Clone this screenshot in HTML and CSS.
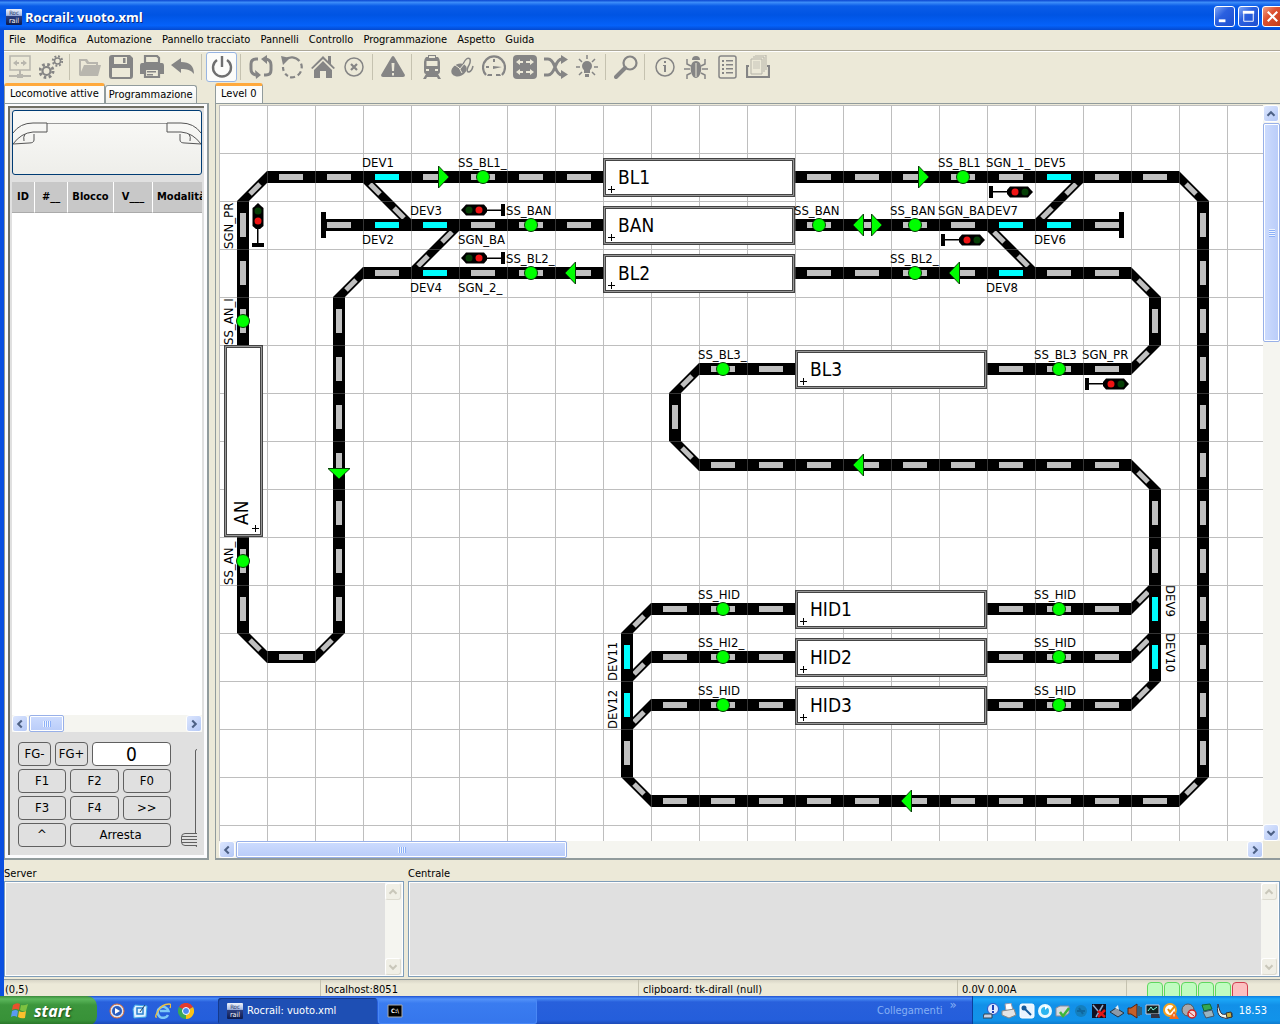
FILE: index.html
```html
<!DOCTYPE html>
<html lang="it">
<head>
<meta charset="utf-8">
<title>Rocrail: vuoto.xml</title>
<link rel="stylesheet" href="styles.css">
</head>
<body>
<svg class="defs" aria-hidden="true">
  <defs>
    <linearGradient id="logo-g" x1="0" y1="0" x2="0" y2="1"><stop offset="0" stop-color="#eef2fb"/><stop offset=".4" stop-color="#a9bbe2"/><stop offset=".45" stop-color="#2c3f80"/><stop offset="1" stop-color="#0d1a4c"/></linearGradient>
    <symbol id="logo" viewBox="0 0 16 16"><rect width="16" height="16" rx="1" fill="url(#logo-g)"/><text x="8" y="6" font-size="6" text-anchor="middle" fill="#223064">Roc</text><text x="8" y="14" font-size="7" text-anchor="middle" fill="#fff">rail</text></symbol>
    <symbol id="up" viewBox="0 0 16 16"><path d="M4 10l4-4 4 4" fill="none" stroke="currentColor" stroke-width="2.4"/></symbol>
    <symbol id="down" viewBox="0 0 16 16"><path d="M4 6l4 4 4-4" fill="none" stroke="currentColor" stroke-width="2.4"/></symbol>
    <symbol id="left" viewBox="0 0 16 16"><path d="M10 4L6 8l4 4" fill="none" stroke="currentColor" stroke-width="2.4"/></symbol>
    <symbol id="right" viewBox="0 0 16 16"><path d="M6 4l4 4-4 4" fill="none" stroke="currentColor" stroke-width="2.4"/></symbol>
  </defs>
</svg>

<div class="window">
  <header class="titlebar">
    <svg class="icon16"><use href="#logo"/></svg>
    <h1>Rocrail: vuoto.xml</h1>
    <button class="cap" aria-label="Riduci"><svg viewBox="0 0 20 20"><path d="M4 13h7v3H4z" fill="#fff"/></svg></button>
    <button class="cap" aria-label="Ingrandisci"><svg viewBox="0 0 20 20"><path d="M5 6h10v9H5z" fill="none" stroke="#fff"/><path d="M4 4h12v3H4z" fill="#fff"/></svg></button>
    <button class="cap close" aria-label="Chiudi"><svg viewBox="0 0 20 20"><path d="M5 5l10 10M15 5L5 15" stroke="#fff" stroke-width="2.2"/></svg></button>
  </header>

  <nav class="menubar">
    <button>File</button><button>Modifica</button><button>Automazione</button><button>Pannello tracciato</button><button>Pannelli</button><button>Controllo</button><button>Programmazione</button><button>Aspetto</button><button>Guida</button>
  </nav>

  <div class="toolbar">
    <button class="off" aria-label="Connetti"><svg viewBox="0 0 24 24"><path d="M2 1h20v14H2z" class="l"/><path d="M5 8l4-3v2h2v2H9v2zM19 8l-4-3v2h-2v2h2v2zM11 15h2v5h-2zM1 20h8v-1h6v1h8v2h-8v1H9v-1H1z"/></svg></button>
    <button aria-label="Impostazioni"><svg viewBox="0 0 24 24"><circle cx="7.500" cy="16" r="4" class="l2"/><circle cx="7.500" cy="16" r="6.500" fill="none" stroke="#858585" stroke-width="3" stroke-dasharray="2.600 2.500"/><circle cx="18.500" cy="6" r="3" class="l"/><circle cx="18.500" cy="6" r="4.700" fill="none" stroke="#858585" stroke-width="2" stroke-dasharray="1.900 1.790"/></svg></button>
    <i></i>
    <button class="off" aria-label="Apri"><svg viewBox="0 0 24 24"><path d="M1 20V4h8l2 3h9v3h3l-3 11H2zM3 17l3-7h12V9H9L7 6H3z" fill-rule="evenodd"/></svg></button>
    <button aria-label="Salva"><svg viewBox="0 0 24 24"><path d="M3 0h18l3 3v18q0 3-3 3H3q-3 0-3-3V3q0-3 3-3zM5 2v7h13V2zM3 13v9h18v-9z" fill-rule="evenodd"/><path d="M14 3h2.500v5H14z"/></svg></button>
    <button aria-label="Stampa"><svg viewBox="0 0 24 24"><path d="M5 1h12l2 2v5H5z" class="l2"/><path d="M2 8h20q2 0 2 3v8h-4v-6H4v6H0v-8q0-3 2-3z"/><path d="M5 14h14v8H5z" class="l2"/><path d="M7 16h9v1.500H7zM7 19h6v1.500H7z"/></svg></button>
    <button aria-label="Annulla"><svg viewBox="0 0 24 24"><path d="M0 10l10-7v4c9 0 13 4 13 12-3-4-7-5-13-5v4z"/></svg></button>
    <i></i>
    <button class="on" aria-label="Alimentazione"><svg viewBox="0 0 24 24"><path d="M7 5a9 9 0 1 0 10 0M12 1v11" fill="none" stroke="#6f6f6f" stroke-width="2.400"/></svg></button>
    <i></i>
    <button aria-label="Automatico"><svg viewBox="0 0 24 24"><path d="M9 4H7Q2 4 2 9v5q0 5 5 6M15 20h2q5 0 5-5v-5q0-5-5-6" class="l3"/><path d="M6 15l6 5-5 4zM18 0v9l-6-5z"/></svg></button>
    <button aria-label="Ripristina"><svg viewBox="0 0 24 24"><path d="M5 5a10 10 0 1 1 4 17" class="l2" stroke-dasharray="16 3 5 3 5 3 5 3"/><path d="M3 12a10 10 0 0 0 5 9" class="l2" stroke-dasharray="4 3"/><path d="M1 1l9 2-7 7z"/></svg></button>
    <button aria-label="Casa"><svg viewBox="0 0 24 24"><path d="M12 1L0 13l1.500 1L12 4l10.500 10 1.500-1-4-4V1h-3v5z"/><path d="M12 6l-9 9v8h6v-7h6v7h6v-8z"/></svg></button>
    <button aria-label="Annulla tutto"><svg viewBox="0 0 24 24"><circle cx="12" cy="12" r="9" class="l"/><path d="M9 9l6 6M15 9l-6 6" class="l2"/></svg></button>
    <i></i>
    <button aria-label="Emergenza"><svg viewBox="0 0 24 24"><path d="M12 1q1 0 2 2l10 17q0 2-2 2H2q-2 0-2-2L10 3q1-2 2-2zm-1.500 7l.5 8h2l.5-8zm.5 10v2.500h2V18z" fill-rule="evenodd"/></svg></button>
    <i></i>
    <button aria-label="Locomotive"><svg viewBox="0 0 24 24"><path d="M8 0h8v2h2q2 2 2 5v9q0 3-2 3l3 5h-3l-1-2H7l-1 2H3l3-5q-2 0-2-3V7q0-3 2-5h2zM6.500 6v5h11V6zM9 1v2h6V1z" fill-rule="evenodd"/><path d="M6 14h3v2H6zM15 14h3v2h-3z" fill="#ece9d8"/></svg></button>
    <button aria-label="Regolatore"><svg viewBox="0 0 24 24"><ellipse cx="8" cy="15" rx="8" ry="6" transform="rotate(-25 8 15)"/><path d="M4 10q5 2 7 8M9 14l4-5" stroke="#ece9d8" fill="none"/><path d="M12 9q4-8 7-5 1 3-2 8-2 5 1 5 3-1 4-6" class="l"/></svg></button>
    <button aria-label="Velocità"><svg viewBox="0 0 24 24"><path d="M4 20A11 11 0 1 1 20 20" class="l2"/><path d="M11 11l9 1-9 2zM4 11h3v2H4zM11 4h2v3h-2zM6 19h4v2H5zM14 19h4l1 2h-5zM6 6l2 2M18 6l-2 2"/></svg></button>
    <button aria-label="Deviatoi"><svg viewBox="0 0 24 24"><rect width="24" height="24" rx="4"/><path d="M3 7l4-3v2h3v2H7v2zM21 7l-4-3v2h-4v2h4v2zM3 17l4-3v2h3v2H7v2zM21 17l-4-3v2h-4v2h4v2z" fill="#ece9d8"/></svg></button>
    <button aria-label="Itinerari"><svg viewBox="0 0 24 24"><path d="M0 4h4q4 0 7 8t7 8M0 20h4q4 0 7-8t7-8" class="l3"/><path d="M17 0l7 4.500L17 9zM17 15l7 4.500-7 4.500z"/></svg></button>
    <button aria-label="Luci"><svg viewBox="0 0 24 24"><circle cx="12" cy="11" r="5"/><path d="M9 14h6v4H9zM10 19h4v3h-4z"/><path d="M12 0v4M1 12h4M19 12h4M4 4l3 3M20 4l-3 3M4 20l3-3M20 20l-3-3" class="l"/></svg></button>
    <i></i>
    <button aria-label="Zoom"><svg viewBox="0 0 24 24"><circle cx="16" cy="8" r="6.500" class="l2"/><path d="M11 13L2 22" stroke="#858585" stroke-width="4" stroke-linecap="round"/></svg></button>
    <i></i>
    <button aria-label="Informazioni"><svg viewBox="0 0 24 24"><circle cx="12" cy="12" r="9" class="l"/><path d="M11 6h2v2h-2zM10 10h3v7h-2v-6h-1z"/></svg></button>
    <button aria-label="Traccia"><svg viewBox="0 0 24 24"><path d="M8 5q0-4 4-4t4 4zM12 6c8 0 6 17 0 17S4 6 12 6z"/><path d="M7 11L3 9V4M17 11l4-2V4M6 14H0M18 14h6M7 18l-4 2v4M17 18l4 2v4" class="l"/><path d="M12 8v14" stroke="#ece9d8"/></svg></button>
    <button aria-label="Elenco"><svg viewBox="0 0 24 24"><rect x="4" y="1" width="17" height="22" rx="2" class="l"/><path d="M7 5h2v2H7zM11 5h7v1.500h-7zM7 9h2v2H7zM11 9h7v1.500h-7zM7 13h2v2H7zM11 13h7v1.500h-7zM7 17h2v2H7zM11 17h7v1.500h-7z"/></svg></button>
    <button aria-label="Documenti"><svg viewBox="0 0 24 24"><path d="M5 4h11v15H5zM7 2h11v15M9 0h11v15" fill="none" stroke="#b5b3a8"/><path d="M7 7h7M7 9h7M7 11h7M7 13h7" stroke="#c5c3b8"/><path d="M3 11H1v11h22V11h-2" class="l2"/></svg></button>
  </div>

  <main class="main">
    <section class="locos">
      <div class="tabs" role="tablist"><button class="tab sel" role="tab">Locomotive attive</button><button class="tab" role="tab">Programmazione</button></div>
      <div class="sheet">
        <div class="inner">
          <button class="locoimg" aria-label="Locomotiva"><svg viewBox="0 0 188 63"><g fill="none" stroke="#555"><path d="M34 12.500h120" stroke="#999"/><path id="nose" d="M0 22Q7 12 20 12h14v9H20Q8 22 0 33l16-1q5 0 5-3v-6M12 23q-2 3-1 7"/><use href="#nose" transform="matrix(-1 0 0 1 188 0)"/></g></svg></button>
          <div class="list">
            <table><thead><tr><th>ID</th><th>#__</th><th>Blocco</th><th>V___</th><th>Modalità</th></tr></thead></table>
          </div>
          <div class="hbar small"><button aria-label="Sinistra"><svg><use href="#left"/></svg></button><span class="thumb"></span><span class="rest"></span><button aria-label="Destra"><svg><use href="#right"/></svg></button></div>
          <div class="controls">
            <div class="keys">
              <div class="krow"><button class="fg">FG-</button><button class="fg">FG+</button><input value="0" aria-label="Velocità"></div>
              <div class="krow"><button>F1</button><button>F2</button><button>F0</button></div>
              <div class="krow"><button>F3</button><button>F4</button><button>&gt;&gt;</button></div>
              <div class="krow"><button>^</button><button class="wide">Arresta</button></div>
            </div>
            <div class="slide"><input type="range" min="0" max="100" value="0" aria-label="Regolazione velocità"></div>
          </div>
        </div>
      </div>
    </section>

    <section class="plan">
      <div class="tabs" role="tablist"><button class="tab sel" role="tab">Level 0</button></div>
      <div class="planbox">
        <svg class="track">
          <defs>
            <pattern id="grid" width="48" height="48" patternUnits="userSpaceOnUse"><path d="M.5 0v48M0 .5h48" stroke="#bebebe"/></pattern>
            <pattern id="grid-top" width="48" height="48" patternUnits="userSpaceOnUse"><path d="M.5 0v48M0 .5h48" stroke="#bebebe" stroke-opacity=".28"/></pattern>
            <g id="c"><path d="M48 18L18 48h12L48 30z"/><path d="M31 41L41 31" stroke="#c0c0c0" stroke-width="5"/></g>
            <circle id="s" r="6.500" fill="#0f0" stroke="#064006"/>
            <path id="ar" d="M3.500-11v22L14-0z" fill="#0f0" stroke="#064006"/>
            <g id="sg"><path d="M-22 0q3-3 5-5.500H1L4-2v4L1 5.500h-18Q-19 3-22 0z"/><path d="M3-.5h17v1.500H3zM18-6h4V6h-4z"/><circle cx="-14" r="3.500" fill="#063f06"/><circle cx="-4" r="3.500" fill="#f01414"/></g>
            <g id="b"><path d="M1.500 6.500h189v36H1.500z" fill="#fff" stroke="#444" stroke-width="3"/><path d="M1.500 6.500h189v36H1.500z" fill="none" stroke="#999"/><path d="M5 36.500h7M8.500 33v7" stroke="#000"/></g>
          </defs>
          <rect width="100%" height="100%" fill="url(#grid)"/>
          <g>
            <use href="#c" x="0" y="48"/><use href="#c" x="96" y="144"/><use href="#c" x="432" y="240"/><use href="#c" x="384" y="480"/><use href="#c" x="384" y="528"/><use href="#c" x="384" y="576"/><use href="#c" x="192" y="96"/><use href="#c" x="816" y="48"/>
            <use href="#c" transform="translate(1008 48) rotate(90)"/><use href="#c" transform="translate(960 144) rotate(90)"/><use href="#c" transform="translate(960 336) rotate(90)"/><use href="#c" transform="translate(192 48) rotate(90)"/><use href="#c" transform="translate(816 96) rotate(90)"/>
            <use href="#c" transform="translate(960 288) rotate(180)"/><use href="#c" transform="translate(144 576) rotate(180)"/><use href="#c" transform="translate(1008 720) rotate(180)"/><use href="#c" transform="translate(960 528) rotate(180)"/><use href="#c" transform="translate(960 576) rotate(180)"/><use href="#c" transform="translate(960 624) rotate(180)"/><use href="#c" transform="translate(240 192) rotate(180)"/><use href="#c" transform="translate(864 144) rotate(180)"/>
            <use href="#c" transform="translate(0 576) rotate(270)"/><use href="#c" transform="translate(432 384) rotate(270)"/><use href="#c" transform="translate(384 720) rotate(270)"/><use href="#c" transform="translate(144 144) rotate(270)"/><use href="#c" transform="translate(768 192) rotate(270)"/>
          </g>
          <path class="rail" d="M48 72H384M576 72H960M104 120H384M576 120H903M144 168H384M576 168H912M480 264H576M768 264H912M480 360H912M432 504H576M768 504H912M432 552H576M768 552H912M432 600H576M768 600H912M432 696H960M48 552H96M24 96V528M120 192V528M936 192V240M936 384V576M984 96V672M456 288V336M408 528V672"/>
          <path d="M102 107h5v26h-5zM900 107h5v26h-5z"/>
          <path class="dash" d="M48 72H384M576 72H960M96 120H384M576 120H912M144 168H384M576 168H912M480 264H576M768 264H912M480 360H912M432 504H576M768 504H912M432 552H576M768 552H912M432 600H576M768 600H912M432 696H960M48 552H96M24 96V528M120 192V528M936 192V240M936 384V576M984 96V672M456 288V336M408 528V672"/>
          <path class="turn" d="M156 72h24M156 120h24M204 120h24M204 168h24M828 72h24M828 120h24M780 120h24M780 168h24M936 492v24M936 540v24M408 540v24M408 588v24"/>
          <rect width="100%" height="100%" fill="url(#grid-top)"/>
          <g>
            <use href="#b" x="384" y="48"/><use href="#b" x="384" y="96"/><use href="#b" x="384" y="144"/><use href="#b" x="576" y="240"/><use href="#b" x="576" y="480"/><use href="#b" x="576" y="528"/><use href="#b" x="576" y="576"/><use href="#b" transform="translate(0 432) rotate(-90)"/>
          </g>
          <g class="name">
            <text x="399" y="79">BL1</text><text x="399" y="127">BAN</text><text x="399" y="175">BL2</text><text x="591" y="271">BL3</text><text x="591" y="511">HID1</text><text x="591" y="559">HID2</text><text x="591" y="607">HID3</text><text transform="translate(29 420) rotate(-90)">AN</text>
          </g>
          <g>
            <use href="#s" x="264" y="72"/><use href="#s" x="312" y="120"/><use href="#s" x="312" y="168"/><use href="#s" x="600" y="120"/><use href="#s" x="696" y="120"/><use href="#s" x="744" y="72"/><use href="#s" x="696" y="168"/><use href="#s" x="840" y="264"/><use href="#s" x="504" y="264"/><use href="#s" x="504" y="504"/><use href="#s" x="504" y="552"/><use href="#s" x="504" y="600"/><use href="#s" x="840" y="504"/><use href="#s" x="840" y="552"/><use href="#s" x="840" y="600"/><use href="#s" x="24" y="216"/><use href="#s" x="24" y="456"/>
            <use href="#ar" x="216" y="72"/><use href="#ar" x="696" y="72"/><use href="#ar" x="649" y="120"/>
            <use href="#ar" transform="translate(360 168) rotate(180)"/><use href="#ar" transform="translate(648 120) rotate(180)"/><use href="#ar" transform="translate(744 168) rotate(180)"/><use href="#ar" transform="translate(648 360) rotate(180)"/><use href="#ar" transform="translate(696 696) rotate(180)"/><use href="#ar" transform="translate(120 360) rotate(90)"/>
            <use href="#sg" x="264" y="105"/><use href="#sg" x="264" y="153"/><use href="#sg" transform="translate(792 87) rotate(180)"/><use href="#sg" transform="translate(744 135) rotate(180)"/><use href="#sg" transform="translate(888 279) rotate(180)"/><use href="#sg" transform="translate(39 120) rotate(90)"/>
          </g>
          <g class="lab">
            <text x="143" y="62">DEV1</text><text x="143" y="139">DEV2</text><text x="191" y="110">DEV3</text><text x="191" y="187">DEV4</text>
            <text x="815" y="62">DEV5</text><text x="815" y="139">DEV6</text><text x="767" y="110">DEV7</text><text x="767" y="187">DEV8</text>
            <text x="239" y="62">SS_BL1_</text><text x="239" y="139">SGN_BA</text><text x="239" y="187">SGN_2_</text>
            <text x="287" y="110">SS_BAN</text><text x="287" y="158">SS_BL2_</text>
            <text x="575" y="110">SS_BAN</text><text x="671" y="110">SS_BAN</text><text x="719" y="110">SGN_BA</text>
            <text x="719" y="62">SS_BL1</text><text x="767" y="62">SGN_1_</text><text x="671" y="158">SS_BL2_</text>
            <text x="815" y="254">SS_BL3</text><text x="863" y="254">SGN_PR</text><text x="479" y="254">SS_BL3_</text>
            <text x="479" y="494">SS_HID</text><text x="479" y="542">SS_HI2_</text><text x="479" y="590">SS_HID</text>
            <text x="815" y="494">SS_HID</text><text x="815" y="542">SS_HID</text><text x="815" y="590">SS_HID</text>
            <text transform="translate(14 144) rotate(-90)">SGN_PR</text>
            <text transform="translate(14 240) rotate(-90)">SS_AN_I</text>
            <text transform="translate(14 480) rotate(-90)">SS_AN_</text>
            <text transform="translate(398 576) rotate(-90)">DEV11</text>
            <text transform="translate(398 624) rotate(-90)">DEV12</text>
            <text transform="translate(947 480) rotate(90)">DEV9</text>
            <text transform="translate(947 528) rotate(90)">DEV10</text>
          </g>
        </svg>
        <div class="vbar"><button aria-label="Su"><svg><use href="#up"/></svg></button><span class="thumb"></span><span class="rest"></span><button aria-label="Giù"><svg><use href="#down"/></svg></button></div>
        <div class="hbar"><button aria-label="Sinistra"><svg><use href="#left"/></svg></button><span class="thumb"></span><span class="rest"></span><button aria-label="Destra"><svg><use href="#right"/></svg></button></div>
      </div>
    </section>
  </main>

  <div class="logs">
    <section><h2>Server</h2><div class="log"><div class="vbar off"><button disabled aria-label="Su"><svg><use href="#up"/></svg></button><span class="rest"></span><button disabled aria-label="Giù"><svg><use href="#down"/></svg></button></div></div></section>
    <section><h2>Centrale</h2><div class="log"><div class="vbar off"><button disabled aria-label="Su"><svg><use href="#up"/></svg></button><span class="rest"></span><button disabled aria-label="Giù"><svg><use href="#down"/></svg></button></div></div></section>
  </div>

  <footer class="status">
    <span>(0,5)</span><span>localhost:8051</span><span>clipboard: tk-dirall (null)</span><span>0.0V 0.00A</span>
    <span class="leds"><b></b><b></b><b></b><b></b><b></b><b class="red"></b></span>
  </footer>
</div>

<footer class="taskbar">
  <button class="start"><svg viewBox="0 0 18 18"><path d="M2 3q4-3 7-1L8 8Q5 6 1 8z" fill="#e8502c"/><path d="M10 3q3 1 7-1l-2 7q-3 1-6-1z" fill="#7fc241"/><path d="M1 9q4-2 6 0l-1 6q-3-2-6 0z" fill="#5a9af0"/><path d="M8 9q3 2 7 0l-1 7q-4 1-7-1z" fill="#fbc02d"/></svg>start</button>
  <div class="quick">
    <button aria-label="Media Player"><svg viewBox="0 0 16 16"><circle cx="8" cy="8" r="7" fill="#dfe8f5" stroke="#e06a2c"/><circle cx="8" cy="8" r="5" fill="#2a5dc0"/><path d="M6 5l5 3-5 3z" fill="#fff"/></svg></button>
    <button aria-label="Mostra desktop"><svg viewBox="0 0 16 16"><path d="M3 2l12 1-1 11-12 1L1 6z" fill="#dff1ff" stroke="#3fa7e8"/><path d="M5 5h6v6H5z" fill="none" stroke="#2a7fd0" stroke-width="1.500"/><path d="M8 9l5-7" stroke="#246" /></svg></button>
    <button aria-label="Internet Explorer"><svg viewBox="0 0 16 16"><path d="M13 12A5.500 5.500 0 1 1 13.500 8H5" fill="none" stroke="#7cc8f8" stroke-width="2.500"/><path d="M2 14Q-1 15 3 8T14 1q3 0 1 4" fill="none" stroke="#f0c040" stroke-width="1.300"/></svg></button>
    <button aria-label="Chrome"><svg viewBox="0 0 16 16"><path d="M8 8L1 4a8 8 0 0 1 14 0z" fill="#e33b2e"/><path d="M8 8l7-4a8 8 0 0 1-7 12z" fill="#fbc116"/><path d="M8 8v8A8 8 0 0 1 1 4z" fill="#3aa757"/><circle cx="8" cy="8" r="3.500" fill="#4a8af4" stroke="#fff"/></svg></button>
  </div>
  <button class="task active"><svg class="icon16"><use href="#logo"/></svg>Rocrail: vuoto.xml</button>
  <button class="task" aria-label="Prompt dei comandi"><svg class="icon16" viewBox="0 0 16 16"><path d="M1 2h14v12H1z" fill="#000" stroke="#aaa"/><text x="8" y="10" font-size="6" font-weight="bold" text-anchor="middle" fill="#fff">C:\</text></svg></button>
  <span class="links">Collegamenti<sup>»</sup></span>
  <div class="tray">
    <svg viewBox="0 0 16 16"><circle cx="10" cy="6" r="5.500" fill="#dfe9ff" stroke="#2d55c8"/><path d="M9 2h2v5H9zM9 8h2v2H9z" fill="#1b3fb5"/><path d="M1 11h8v4H0z" fill="#c8d0e0" stroke="#345"/></svg>
    <svg viewBox="0 0 16 16"><path d="M4 1l6-1 2 7-7 1z" fill="#fff" stroke="#99a"/><path d="M1 8l12-2 2 6-7 3-7-3z" fill="#e4e4e4" stroke="#888"/></svg>
    <svg viewBox="0 0 16 16"><rect x="1" y="1" width="14" height="14" rx="2" fill="#e9f4ff" stroke="#fff"/><path d="M4 4l8 8" stroke="#135a9c" stroke-width="2"/><circle cx="5" cy="5" r="2.500" fill="#135a9c"/></svg>
    <svg viewBox="0 0 16 16"><circle cx="8" cy="8" r="5.500" fill="#2ab5f0" stroke="#e8faff" stroke-width="3"/><path d="M8 2l3 2-3 3z" fill="#fff"/></svg>
    <svg viewBox="0 0 16 16"><path d="M1 5l4-2h9v7l-4 3H1z" fill="#d8dce0" stroke="#889"/><path d="M5 9l3 4 6-8" fill="none" stroke="#3eb53a" stroke-width="2.500"/></svg>
    <svg viewBox="0 0 16 16"><circle cx="8" cy="8" r="6" fill="#147fbd"/><path d="M4 8h8M6 5l4 6" stroke="#0f68a0" stroke-width="2"/></svg>
    <svg viewBox="0 0 16 16"><path d="M1 1h14v14H1z" fill="#112"/><path d="M2 2l5 6M12 2L5 14" stroke="#8ac" stroke-width="1.500"/><path d="M7 8l7 6M14 7l-7 7" stroke="#e01818" stroke-width="2.500"/></svg>
    <svg viewBox="0 0 16 16"><path d="M1 9l6-4 8 5-6 4z" fill="#8b99a8" stroke="#234"/><path d="M6 5l3-3 1 5z" fill="#e8eef4"/></svg>
    <svg viewBox="0 0 16 16"><path d="M1 5h3l6-4v14l-6-4H1z" fill="#c4602a" stroke="#521"/><path d="M12 3v10M14 4v8" stroke="#531"/></svg>
    <svg viewBox="0 0 16 16"><path d="M1 2h13v9H1z" fill="#122" stroke="#ccd"/><path d="M3 8l3-4 2 3 4-3" fill="none" stroke="#7fd"/><path d="M6 11h8l1 4H6z" fill="#334"/></svg>
    <svg viewBox="0 0 16 16"><circle cx="7" cy="7" r="6" fill="#fff" stroke="#f0a020" stroke-width="2"/><path d="M5 6l2 3 5-6" fill="none" stroke="#e69010" stroke-width="2"/><path d="M11 8l5 8H6z" fill="#f36b1c"/><path d="M11 11v2.500" stroke="#fff"/></svg>
    <svg viewBox="0 0 16 16"><circle cx="7" cy="7" r="6" fill="#a9a9ad" stroke="#555"/><circle cx="11" cy="11" r="4" fill="#f4d8d8" stroke="#d02020" stroke-width="1.500"/><path d="M8 9l5 4" stroke="#d02020"/></svg>
    <svg viewBox="0 0 16 16"><path d="M3 2l8-1 2 5-8 2z" fill="#35a853" stroke="#163"/><path d="M4 9l9-2 2 6-8 2z" fill="#9bb4c0" stroke="#456"/></svg>
    <svg viewBox="0 0 16 16"><path d="M1 1q2 9 4 10t10-1v4q-6 3-11 0T1 1z" fill="#f4f4ec" stroke="#334"/><path d="M9 10l5-1 1 5-5 1z" fill="#c8b040" stroke="#333"/></svg>
    <time>18.53</time>
  </div>
</footer>
</body>
</html>
```
FILE: styles.css
```css
* { box-sizing: border-box; }
body {
  margin: 0;
  min-height: 100vh;
  display: flex;
  flex-direction: column;
  font: 11px/14px "DejaVu Sans Condensed", "DejaVu Sans", sans-serif;
  color: #000;
  background: #ece9d8;
  overflow-x: hidden;
}
button, input { font: inherit; color: inherit; margin: 0; padding: 0; border: 0; background: none; }
h1, h2 { margin: 0; font-weight: normal; }
svg { display: block; }
.defs { position: absolute; width: 0; height: 0; }
.icon16 { width: 16px; height: 16px; flex: none; }

.window { flex: 1; display: flex; flex-direction: column; border-left: 4px solid #0a4fe0; }

.titlebar {
  height: 30px;
  margin-left: -4px;
  padding: 3px 0 0 6px;
  display: flex;
  align-items: center;
  gap: 3px;
  background: linear-gradient(#0a45d0, #3c8cf8 8%, #0a5ce8 20%, #0054e3 50%, #0562fa 85%, #0449cf);
}
.titlebar h1 {
  flex: 1;
  font: bold 13px/18px "Open Sans", sans-serif;
  color: #fff;
  text-shadow: 1px 1px #0a2a80;
}
.cap { width: 21px; height: 21px; border: 1px solid #fff; border-radius: 3px; background: linear-gradient(135deg, #7fa6f5, #2a60e0 40%, #1c4fd0); }
.cap.close { margin-right: -3px; background: linear-gradient(135deg, #f0a088, #dd5030 40%, #c43c18); }

.menubar { height: 21px; padding-left: 2px; display: flex; border-bottom: 1px solid #aca899; }
.menubar button { padding: 0 3px; margin-right: 4px; height: 19px; }

.toolbar { height: 32px; display: flex; align-items: flex-start; border-top: 1px solid #fff; }
.toolbar button { width: 31px; height: 30px; display: grid; place-items: center; flex: none; border-radius: 3px; }
.toolbar i { width: 8px; height: 26px; margin-top: 2px; flex: none; background: linear-gradient(#c5c2b0, #c5c2b0) 3px 0 / 1px 26px no-repeat; }
.toolbar svg { width: 24px; height: 24px; fill: #858585; }
.toolbar .off { opacity: .5; }
.toolbar .on { background: #fcfcfa; border: 1px solid #98b5e2; }
.l, .l2, .l3 { fill: none; stroke: #858585; stroke-width: 1.5px; }
.l2 { stroke-width: 2.2px; }
.l3 { stroke-width: 3px; }

.main { flex: 1; display: flex; gap: 6px; }
.locos { width: 205px; flex: none; display: flex; flex-direction: column; }
.plan { flex: 1; min-width: 0; display: flex; flex-direction: column; }
.tabs { height: 20px; display: flex; align-items: flex-end; }
.tab { height: 18px; padding: 0 3px; border: 1px solid #919b9c; border-bottom: 0; border-radius: 3px 3px 0 0; background: linear-gradient(#fff, #f0f0ea); }
.tab.sel { height: 20px; padding: 0 5px 2px; border-top: 3px solid #ffa93c; background: #fcfcfa; }
.sheet, .planbox { flex: 1; border: 1px solid #919b9c; border-width: 1px 2px 2px 1px; background: #fcfcfe; }
.sheet { padding: 2px 3px 3px; display: flex; min-height: 0; }
.inner { flex: 1; min-width: 0; padding: 2px 2px 0; display: flex; flex-direction: column; border: solid #716f64; border-width: 2px 0 0 2px; background: #e0e0e0; }
.locoimg { height: 65px; width: 190px; border: 1px solid #003c74; border-radius: 3px; background: linear-gradient(#fafaf8, #eeeeea); overflow: hidden; flex: none; }
.locoimg svg { width: 188px; height: 63px; }
.list { flex: 1; min-height: 200px; margin-top: 7px; overflow: hidden; background: #fff; }
table { border-collapse: separate; border-spacing: 0; table-layout: fixed; width: 210px; background: #c8c8c8; }
th { height: 31px; padding: 0; border-right: 1px solid #fff; border-bottom: 1px solid #aaa; font-weight: bold; text-align: center; }
th:nth-child(1) { width: 23px; }
th:nth-child(2) { width: 33px; }
th:nth-child(3) { width: 46px; }
th:nth-child(4) { width: 39px; }
th:nth-child(5) { text-align: left; padding-left: 4px; }

.hbar, .vbar { display: flex; background: #f5f5f0; }
.vbar { flex-direction: column; }
.hbar button, .vbar button { width: 16px; height: 17px; flex: none; border: 1px solid #fff; border-radius: 3px; background: linear-gradient(135deg, #dce6fe, #b4c8f6); color: #4d6185; }
.hbar button svg, .vbar button svg { width: 14px; height: 14px; }
.rest { flex: 1; }
.thumb { border: 1px solid #98b0e8; border-radius: 2px; outline: 1px solid #fff; outline-offset: -2px; }
.hbar .thumb { width: 331px; margin-left: 1px; background: repeating-linear-gradient(90deg, #eef4fe 0 1px, #8cb0f8 1px 2px) center / 8px 6px no-repeat, linear-gradient(#cddcfe, #b9ccf9); }
.hbar.small .thumb { width: 35px; }
.vbar .thumb { height: 219px; margin-top: 1px; background: repeating-linear-gradient(#eef4fe 0 1px, #8cb0f8 1px 2px) center / 6px 8px no-repeat, linear-gradient(90deg, #cddcfe, #b9ccf9); }
.vbar.off button { color: #c9c7ba; background: #f0efe6; border-color: #fff #dddbd0 #dddbd0 #fff; }

.controls { display: flex; gap: 10px; padding: 10px 5px 8px 6px; }
.keys { width: 153px; flex: none; display: grid; grid-template-columns: minmax(0, 1fr); gap: 3px; }
.krow { display: flex; gap: 4px; }
.krow button, .krow input { flex: 1; width: 0; min-width: 0; height: 24px; border: 1px solid #606060; border-radius: 4px; font-size: 13px; text-align: center; }
.krow .fg { flex: none; width: 33px; }
.krow .wide { flex: none; width: 101px; }
.krow input { background: #fff; font-size: 19px; }
.slide { width: 17px; padding-top: 7px; overflow: hidden; }
.slide input { appearance: none; writing-mode: vertical-lr; direction: rtl; width: 32px; height: 98px; display: block; }
.slide input::-webkit-slider-runnable-track { width: 4px; height: 98px; border: 1px solid #606060; border-radius: 2px; }
.slide input::-webkit-slider-thumb { appearance: none; width: 32px; height: 13px; margin-left: -15px; border: 1px solid #606060; border-radius: 4px; background: repeating-linear-gradient(#e0e0e0 0 2px, #606060 2px 3px); }

.planbox { display: grid; grid-template: minmax(0, 1fr) 17px / minmax(0, 1fr) 17px; padding: 1px 0 0 3px; border-right: 0; background: #ece9d8; }
.track { width: 100%; height: 100%; min-height: 736px; background: #fff; overflow: hidden; }
.rail { fill: none; stroke: #000; stroke-width: 12px; }
.dash { fill: none; stroke: #c0c0c0; stroke-width: 6px; stroke-dasharray: 0 12 24 12; }
.turn { stroke: #0ff; stroke-width: 6px; }
.name { font-size: 19px; }
.lab { font-size: 13px; }

.logs { display: flex; gap: 4px; padding-top: 6px; }
.logs section:first-child { width: 400px; flex: none; }
.logs section:last-child { flex: 1; }
.logs h2 { font-size: 11px; line-height: 15px; }
.log { height: 96px; padding: 1px; display: flex; justify-content: flex-end; border: 1px solid #7f9db9; background: #e0e0e0; box-shadow: inset 0 0 0 1px #fff; }
.log .vbar { width: 17px; }

.status { height: 17px; margin-top: 2px; display: grid; grid-template-columns: 316px 318px 319px 169px 1fr; border-top: 1px solid #919b9c; background: linear-gradient(#d8d5c6, #ece9d8 4px); overflow: hidden; }
.status span { padding: 3px 1px 0; border-left: 1px solid #c5c2b0; white-space: nowrap; }
.status span:first-child { border: 0; }
.status span:not(:first-child) { padding-left: 4px; }
.status .leds:not(:first-child) { display: flex; gap: 1px; padding: 2px 0 0 20px; }
.leds b { width: 16px; height: 20px; border: 1px solid #5fd75f; border-radius: 4px; background: #c0fcc0; }
.leds .red { border-color: #d04050; background: #fcc0c0; }

.taskbar { height: 30px; display: flex; align-items: stretch; color: #fff; background: linear-gradient(#1f4fd0, #4a8cf5 8%, #2860dc 20%, #245edb 80%, #1941a5); }
.start { width: 97px; display: flex; align-items: center; gap: 5px; padding: 0 0 0 11px; border-radius: 0 10px 10px 0; background: linear-gradient(#3b8a3b, #5cb85c 10%, #3c963c 30%, #389238 80%, #236b23); font: italic bold 16px/20px "Open Sans", sans-serif; text-shadow: 1px 1px 2px #1a4a1a; }
.start svg { width: 18px; height: 18px; }
.quick { width: 121px; padding-left: 12px; display: flex; align-items: center; gap: 7px; }
.quick svg, .tray svg { width: 16px; height: 16px; }
.task { width: 159px; margin: 2px 1px 2px 0; padding-left: 9px; display: flex; align-items: center; gap: 4px; border-radius: 3px; background: linear-gradient(#5a98fa, #3a7cf0 20%, #3576ec); box-shadow: inset 0 0 0 1px #4a88f5; }
.task.active { background: #1e4fb4; box-shadow: inset 1px 1px #153a8c; }
.links { margin-left: auto; align-self: center; color: #86b0f4; margin-right: 15px; }
.links sup { margin-left: 7px; font-size: 13px; line-height: 0; }
.tray { display: flex; align-items: center; gap: 2px; padding: 0 13px 0 10px; border-left: 1px solid #0a3f9c; background: linear-gradient(#0d7ee0, #1ca8f8 10%, #1290e8 30%, #1193ea 80%, #0c6fc0); }
.tray time { margin-left: 4px; }
```
